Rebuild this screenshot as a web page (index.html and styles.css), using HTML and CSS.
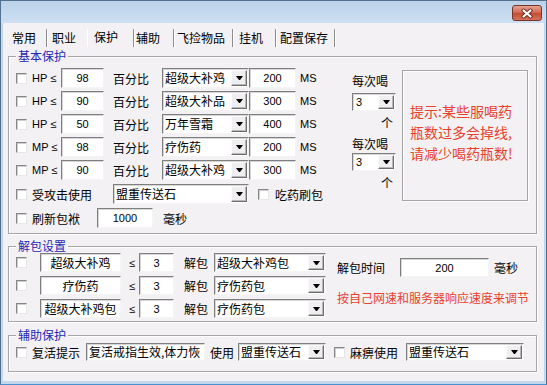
FILE: index.html
```html
<!DOCTYPE html>
<html lang="zh-CN">
<head>
  <meta charset="UTF-8" />
  <title>保护</title>
  <link rel="stylesheet" href="styles.css">
</head>
<body>
  <div class="window">
    <div class="titlebar">
      <span class="close-btn">
        <svg width="14" height="11" viewBox="0 0 14 11">
          <path d="M3.5 2.5 L10.5 8.5 M10.5 2.5 L3.5 8.5" stroke="#6a2a1c" stroke-width="4" stroke-linecap="round" fill="none"/>
          <path d="M3.5 2.5 L10.5 8.5 M10.5 2.5 L3.5 8.5" stroke="#fff" stroke-width="2.2" stroke-linecap="round" fill="none"/>
        </svg>
      </span>
    </div>

    <div class="client">
      <!-- Tabs -->
      <div class="tabs">
        <span class="tab t1">常用</span>
        <span class="tab t2">职业</span>
        <span class="tab t3 active">保护</span>
        <span class="tab t4">辅助</span>
        <span class="tab t5">飞捡物品</span>
        <span class="tab t6">挂机</span>
        <span class="tab t7">配置保存</span>
      </div>

      <!-- 基本保护 -->
      <fieldset class="group basic">
        <legend>基本保护</legend>
        <div class="rows">
          <div class="row">
            <span class="cb"></span><span class="lat hp">HP ≤</span>
            <input class="num pct" value="98"><span class="unit">百分比</span>
            <div class="combo drug"><span class="val">超级大补鸡</span><i class="arrow"></i></div>
            <input class="num ms" value="200"><span class="lat ms-lab">MS</span>
          </div>
          <div class="row">
            <span class="cb"></span><span class="lat hp">HP ≤</span>
            <input class="num pct" value="90"><span class="unit">百分比</span>
            <div class="combo drug"><span class="val">超级大补品</span><i class="arrow"></i></div>
            <input class="num ms" value="300"><span class="lat ms-lab">MS</span>
          </div>
          <div class="row">
            <span class="cb"></span><span class="lat hp">HP ≤</span>
            <input class="num pct" value="50"><span class="unit">百分比</span>
            <div class="combo drug"><span class="val">万年雪霜</span><i class="arrow"></i></div>
            <input class="num ms" value="400"><span class="lat ms-lab">MS</span>
          </div>
          <div class="row">
            <span class="cb"></span><span class="lat hp">MP ≤</span>
            <input class="num pct" value="98"><span class="unit">百分比</span>
            <div class="combo drug"><span class="val">疗伤药</span><i class="arrow"></i></div>
            <input class="num ms" value="200"><span class="lat ms-lab">MS</span>
          </div>
          <div class="row">
            <span class="cb"></span><span class="lat hp">MP ≤</span>
            <input class="num pct" value="90"><span class="unit">百分比</span>
            <div class="combo drug"><span class="val">超级大补鸡</span><i class="arrow"></i></div>
            <input class="num ms" value="300"><span class="lat ms-lab">MS</span>
          </div>
          <div class="row extra">
            <span class="cb"></span><span class="attack-lab">受攻击使用</span>
            <div class="combo stone"><span class="val">盟重传送石</span><i class="arrow"></i></div>
            <span class="cb cb-eat"></span><span>吃药刷包</span>
          </div>
          <div class="row extra">
            <span class="cb"></span><span class="refresh-lab">刷新包袱</span>
            <input class="num refresh" value="1000"><span class="ms-unit">毫秒</span>
          </div>
        </div>

        <div class="per-drink">
          <div class="drink-lab">每次喝</div>
          <div class="combo small"><span class="val lat">3</span><i class="arrow"></i></div>
          <div class="piece">个</div>
          <div class="drink-lab second">每次喝</div>
          <div class="combo small second"><span class="val lat">3</span><i class="arrow"></i></div>
          <div class="piece">个</div>
        </div>

        <div class="hint">提示:某些服喝药<br>瓶数过多会掉线,<br>请减少喝药瓶数!</div>
      </fieldset>

      <!-- 解包设置 -->
      <fieldset class="group unpack">
        <legend>解包设置</legend>
        <div class="rows2">
          <div class="row2">
            <span class="cb"></span><span class="itembox">超级大补鸡</span><span class="le">≤</span>
            <input class="num cnt" value="3"><span class="unpack-lab">解包</span>
            <div class="combo pack"><span class="val">超级大补鸡包</span><i class="arrow"></i></div>
          </div>
          <div class="row2">
            <span class="cb"></span><span class="itembox">疗伤药</span><span class="le">≤</span>
            <input class="num cnt" value="3"><span class="unpack-lab">解包</span>
            <div class="combo pack"><span class="val">疗伤药包</span><i class="arrow"></i></div>
          </div>
          <div class="row2">
            <span class="cb"></span><span class="itembox">超级大补鸡包</span><span class="le">≤</span>
            <input class="num cnt" value="3"><span class="unpack-lab">解包</span>
            <div class="combo pack"><span class="val">疗伤药包</span><i class="arrow"></i></div>
          </div>
        </div>
        <div class="timing">
          <div class="timing-row">
            <span class="timing-lab">解包时间</span>
            <input class="num delay" value="200"><span class="ms-unit">毫秒</span>
          </div>
          <div class="note">按自己网速和服务器响应速度来调节</div>
        </div>
      </fieldset>

      <!-- 辅助保护 -->
      <fieldset class="group assist">
        <legend>辅助保护</legend>
        <div class="row3">
          <span class="cb"></span><span class="revive-lab">复活提示</span>
          <span class="revive">复活戒指生效,体力恢</span>
          <span class="use-lab">使用</span>
          <div class="combo stone2"><span class="val">盟重传送石</span><i class="arrow"></i></div>
          <span class="cb cb-para"></span><span class="para-lab">麻痹使用</span>
          <div class="combo stone3"><span class="val">盟重传送石</span><i class="arrow"></i></div>
        </div>
      </fieldset>
    </div>
  </div>
</body>
</html>
```

FILE: styles.css
```css
* { box-sizing: border-box; }
body {
  margin: 0;
  font-family: "Noto Sans CJK SC", "Liberation Sans", sans-serif;
  font-size: 12px;
  color: #000;
  background: #fff;
}

.window {
  width: 547px;
  height: 385px;
  background: #c3d7ed;
  border: 1px solid #50708f;
  border-bottom-color: #4a8fce;
  display: flex;
  flex-direction: column;
}

.titlebar {
  height: 22px;
  flex: none;
  display: flex;
  justify-content: flex-end;
  background: linear-gradient(#bcd2ea, #cddff1);
}

.close-btn {
  width: 30px;
  height: 16px;
  margin: 4px 4px 0 0;
  border: 1px solid #7b3527;
  border-radius: 3px;
  background: linear-gradient(#e5a493, #d0644e 50%, #c24a33 51%, #d5735c);
  display: flex;
  align-items: center;
  justify-content: center;
}

.client {
  flex: 1;
  margin: 0 2px 3px;
  background: #f3f1f3;
  display: flex;
  flex-direction: column;
}

/* tabs */
.tabs {
  display: flex;
  margin-top: 6px;
  height: 18px;
}
.tab {
  line-height: 18px;
  font-size: 12px;
  white-space: nowrap;
  border-right: 1px solid #8c8c8c;
  box-shadow: 1px 0 0 #fff;
}
.tab.t1 { width: 44px; padding-left: 9px; }
.tab.t2 { width: 40px; padding-left: 5px; border-right: none; box-shadow: none; }
.tab.t3 { width: 47px; padding-left: 6px; border-left: 1px solid #fff; }
.tab.t4 { width: 40px; padding-left: 2px; }
.tab.t5 { width: 59px; padding-left: 3px; }
.tab.t6 { width: 43px; padding-left: 6px; }
.tab.t7 { width: 59px; padding-left: 4px; }
.tab.active { line-height: 15px; padding-bottom: 3px; }

/* group boxes */
.group {
  margin: 0 7px 0 5px;
  border: 1px solid #a6a6a6;
  box-shadow: inset 1px 1px 0 #fff, 1px 1px 0 #fff;
  min-width: 0;
  display: flex;
}
.group legend {
  color: #2525b5;
  line-height: 14px;
  padding: 0 2px;
  background: #f3f1f3;
}

.basic { margin-top: 2px; padding: 5px 5px 5px 7px; }
.unpack { margin-top: 5px; padding: 0 5px 3px 7px; }
.assist { margin-top: 6px; padding: 1px 5px 10px 7px; }

/* common controls */
.cb {
  width: 11px;
  height: 11px;
  flex: none;
  background: #fff;
  border: 1px solid;
  border-color: #868686 #e6e6e6 #e6e6e6 #868686;
  box-shadow: inset 1px 1px 0 #cfcfcf;
  margin-right: 5px;
}

input.num, .revive, .itembox {
  height: 20px;
  font-family: "Liberation Sans", sans-serif;
  font-size: 11px;
  text-align: center;
  background: #fff;
  border: 1px solid;
  border-color: #7f7f7f #f4f4f4 #f4f4f4 #7f7f7f;
  box-shadow: inset 1px 1px 0 #d6d6d6;
  padding: 0;
  margin: 0;
  outline: none;
  color: #000;
}

.lat {
  font-family: "Liberation Sans", sans-serif;
  font-size: 11px;
}

.combo {
  height: 20px;
  display: flex;
  align-items: stretch;
  background: #fff;
  border: 1px solid;
  border-color: #7f7f7f #f4f4f4 #f4f4f4 #7f7f7f;
  box-shadow: inset 1px 1px 0 #d6d6d6;
  padding: 1px 1px 1px 2px;
  overflow: hidden;
}
.combo .val {
  flex: 1;
  min-width: 0;
  white-space: nowrap;
  overflow: hidden;
  line-height: 16px;
}
.combo .arrow {
  width: 16px;
  flex: none;
  display: flex;
  align-items: center;
  justify-content: center;
  background: #f0eef0;
  border: 1px solid;
  border-color: #fbfbfb #6e6e6e #6e6e6e #fbfbfb;
  box-shadow: inset -1px -1px 0 #b8b8b8;
}
.combo .arrow::after {
  content: "";
  width: 1px;
  border-left: 3px solid transparent;
  border-right: 3px solid transparent;
  border-top: 4px solid #000;
}

/* basic protection */
.rows {
  width: 336px;
  flex: none;
  display: flex;
  flex-direction: column;
  gap: 3px;
}
.row {
  height: 20px;
  display: flex;
  align-items: center;
}
.row.extra { margin-top: 1px; }
.hp { width: 29px; }
.pct { width: 43px; }
.unit { width: 49px; margin-left: 9px; }
.drug { width: 87px; }
.ms { width: 47px; margin-left: 9px; }
.ms-lab { margin-left: 4px; }
.attack-lab { width: 81px; }
.stone { width: 136px; }
.cb-eat { margin-left: 9px; margin-right: 6px; }
.refresh-lab { width: 65px; }
.refresh { width: 56px; }
.ms-unit { margin-left: 10px; }

.per-drink {
  width: 44px;
  flex: none;
  display: flex;
  flex-direction: column;
}
.drink-lab { line-height: 16px; margin-top: 5px; white-space: nowrap; }
.drink-lab.second { margin-top: 6px; }
.combo.small { height: 18px; margin-top: 4px; }
.combo.small.second { margin-top: 1px; }
.combo.small .val { line-height: 14px; padding-left: 1px; }
.piece { line-height: 14px; margin-top: 5px; text-align: right; padding-right: 3px; }

.hint {
  width: 126px;
  height: 131px;
  flex: none;
  margin: 2px 0 0 6px;
  border: 1px solid #a6a6a6;
  box-shadow: inset 1px 1px 0 #fff, 1px 1px 0 #fff;
  padding: 30px 0 0 7px;
  color: #e8412c;
  font-size: 14px;
  line-height: 21px;
  white-space: nowrap;
}

/* unpack */
.rows2 {
  display: flex;
  flex-direction: column;
  gap: 4px;
}
.row2 {
  height: 19px;
  display: flex;
  align-items: center;
}
.row2 .cb { margin-right: 13px; }
.itembox {
  width: 81px;
  height: 19px;
  font-family: "Noto Sans CJK SC", sans-serif;
  font-size: 12px;
  line-height: 17px;
  white-space: nowrap;
}
.le { width: 10px; margin-left: 8px; font-family: "Liberation Sans", sans-serif; font-size: 11px; }
.cnt { width: 35px; height: 19px !important; }
.unpack-lab { width: 30px; margin-left: 10px; }
.pack { width: 112px; height: 19px; }

.timing { margin-left: 11px; }
.timing-row {
  display: flex;
  align-items: center;
  margin-top: 5px;
}
.timing-lab { width: 63px; }
.delay { width: 89px; height: 19px !important; }
.timing .ms-unit { margin-left: 5px; }
.note {
  margin-top: 14px;
  line-height: 14px;
  color: #e8412c;
  white-space: nowrap;
}

/* assist */
.row3 {
  height: 18px;
  display: flex;
  align-items: center;
}
.revive-lab { width: 54px; }
.revive {
  width: 119px;
  height: 18px;
  font-family: "Noto Sans CJK SC", sans-serif;
  font-size: 12px;
  line-height: 16px;
  text-align: left;
  padding-left: 2px;
  white-space: nowrap;
  overflow: hidden;
}
.use-lab { width: 28px; margin-left: 5px; }
.stone2 { width: 88px; height: 18px; padding: 0 1px 0 2px; }
.cb-para { margin-left: 8px; }
.para-lab { width: 56px; }
.stone3 { width: 118px; height: 18px; padding: 0 1px 0 2px; }
.stone2 .arrow, .stone3 .arrow { margin: 1px 0; }
```
